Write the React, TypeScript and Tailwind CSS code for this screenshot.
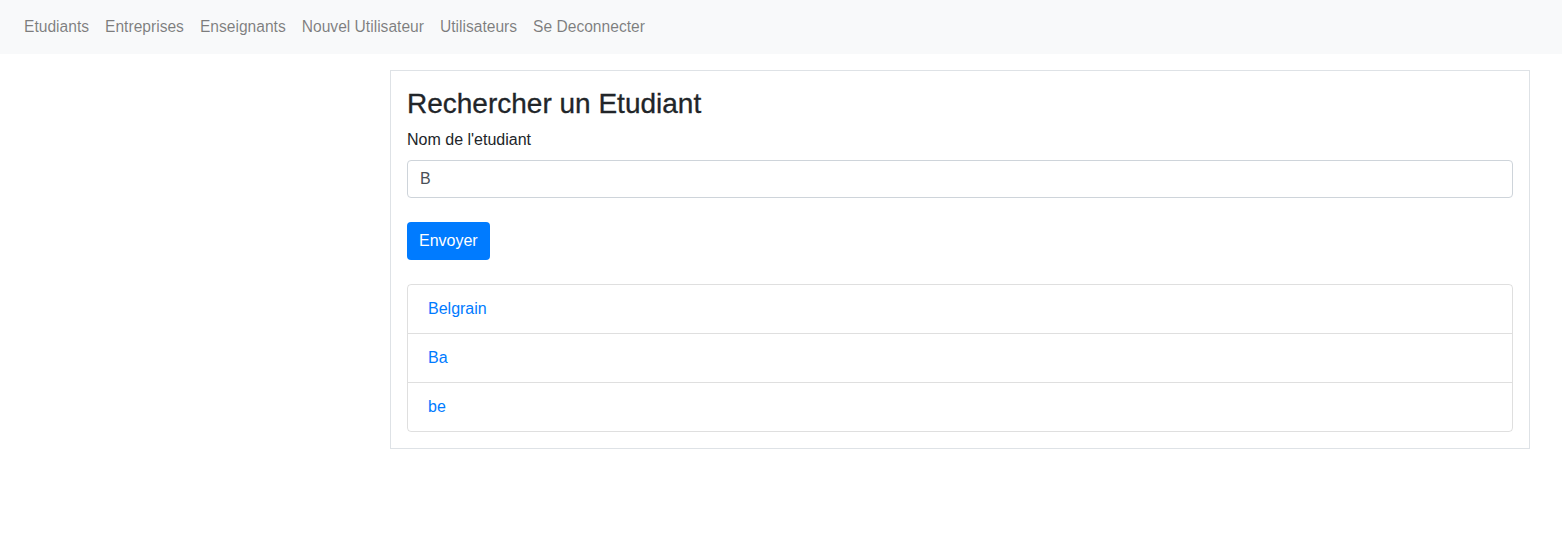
import React, { useState } from "react";

const navLinks = ["Etudiants", "Entreprises", "Enseignants", "Nouvel Utilisateur", "Utilisateurs", "Se Deconnecter"];
const results = ["Belgrain", "Ba", "be"];

export default function App() {
  const [nom, setNom] = useState("B");

  return (
    <div className="min-h-[545px] bg-white text-[#212529] text-base" style={{ fontFamily: '"Segoe UI", "Liberation Sans", Arial, sans-serif' }}>
      {/* Barre de navigation */}
      <nav className="h-[54px] bg-[#f8f9fa] flex items-center px-4">
        {navLinks.map((l) => (
          <a key={l} href="#" className="px-2 leading-6 text-[15.6px] text-black/50 hover:text-black/70">
            {l}
          </a>
        ))}
      </nav>

      <div className="pl-[390px] pt-4">
        <div className="w-[1140px] border border-[#dee2e6] p-4">
          <h3 className="text-[28px] leading-[33px] font-medium mb-2 [-webkit-text-stroke:0.3px_#212529]">Rechercher un Etudiant</h3>
          <label className="block leading-6 mb-2">Nom de l'etudiant</label>
          <input
            value={nom}
            onChange={(e) => setNom(e.target.value)}
            className="block w-full h-[38px] px-3 border border-[#ced4da] rounded text-[#495057] outline-none"
          />
          <button className="mt-6 h-[38px] px-3 bg-[#007bff] text-white rounded leading-6">Envoyer</button>

          <ul className="mt-6 border border-black/[0.125] rounded">
            {results.map((r, i) => (
              <li key={r} className={`flex items-center px-5 ${i > 0 ? "h-[49px] border-t border-black/[0.125]" : "h-12"}`}>
                <a href="#" className="text-[#007bff] leading-6">{r}</a>
              </li>
            ))}
          </ul>
        </div>
      </div>
    </div>
  );
}
